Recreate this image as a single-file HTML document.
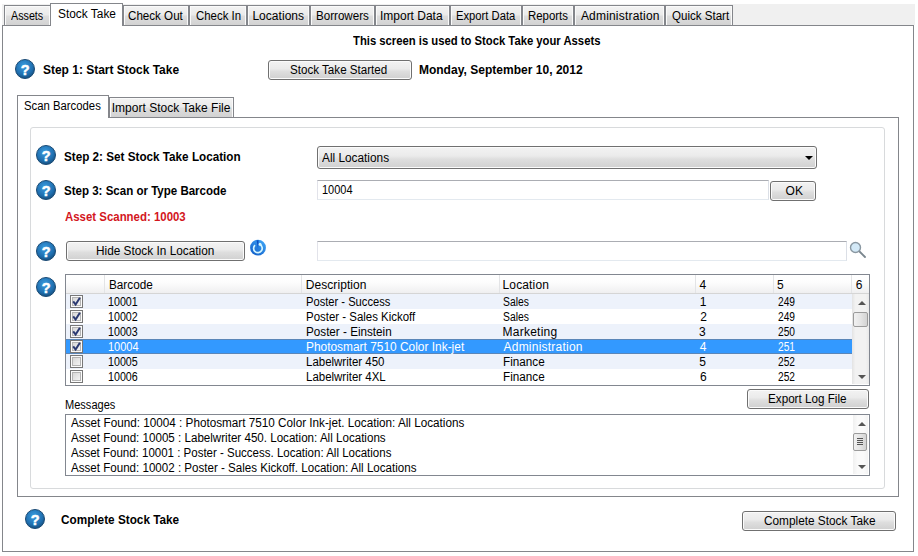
<!DOCTYPE html>
<html><head><meta charset="utf-8"><style>
html,body{margin:0;padding:0;background:#fff;}
body{width:918px;height:556px;position:relative;overflow:hidden;font-family:"Liberation Sans", sans-serif;font-size:12px;}
.t{position:absolute;line-height:12px;white-space:nowrap;font-size:12px;}
</style></head><body>
<div style="position:absolute;left:2px;top:4px;width:913px;height:21px;background:#f0f0f0"></div>
<div style="position:absolute;left:2px;top:25px;width:910px;height:525px;border:1px solid #84868b;background:#fff"></div>
<div style="position:absolute;left:4px;top:5px;width:45px;height:19px;border:1px solid #84868b;border-bottom:none;background:linear-gradient(#f3f3f3 0%,#ebebeb 45%,#dddddd 55%,#d2d2d2 100%);box-shadow:inset 1px 1px 0 #fafafa,inset -1px 0 0 #fafafa"></div>
<div style="position:absolute;left:123px;top:5px;width:64px;height:19px;border:1px solid #84868b;border-bottom:none;background:linear-gradient(#f3f3f3 0%,#ebebeb 45%,#dddddd 55%,#d2d2d2 100%);box-shadow:inset 1px 1px 0 #fafafa,inset -1px 0 0 #fafafa"></div>
<div style="position:absolute;left:189px;top:5px;width:56px;height:19px;border:1px solid #84868b;border-bottom:none;background:linear-gradient(#f3f3f3 0%,#ebebeb 45%,#dddddd 55%,#d2d2d2 100%);box-shadow:inset 1px 1px 0 #fafafa,inset -1px 0 0 #fafafa"></div>
<div style="position:absolute;left:247px;top:5px;width:61px;height:19px;border:1px solid #84868b;border-bottom:none;background:linear-gradient(#f3f3f3 0%,#ebebeb 45%,#dddddd 55%,#d2d2d2 100%);box-shadow:inset 1px 1px 0 #fafafa,inset -1px 0 0 #fafafa"></div>
<div style="position:absolute;left:310px;top:5px;width:63px;height:19px;border:1px solid #84868b;border-bottom:none;background:linear-gradient(#f3f3f3 0%,#ebebeb 45%,#dddddd 55%,#d2d2d2 100%);box-shadow:inset 1px 1px 0 #fafafa,inset -1px 0 0 #fafafa"></div>
<div style="position:absolute;left:375px;top:5px;width:73px;height:19px;border:1px solid #84868b;border-bottom:none;background:linear-gradient(#f3f3f3 0%,#ebebeb 45%,#dddddd 55%,#d2d2d2 100%);box-shadow:inset 1px 1px 0 #fafafa,inset -1px 0 0 #fafafa"></div>
<div style="position:absolute;left:450px;top:5px;width:70px;height:19px;border:1px solid #84868b;border-bottom:none;background:linear-gradient(#f3f3f3 0%,#ebebeb 45%,#dddddd 55%,#d2d2d2 100%);box-shadow:inset 1px 1px 0 #fafafa,inset -1px 0 0 #fafafa"></div>
<div style="position:absolute;left:522px;top:5px;width:50px;height:19px;border:1px solid #84868b;border-bottom:none;background:linear-gradient(#f3f3f3 0%,#ebebeb 45%,#dddddd 55%,#d2d2d2 100%);box-shadow:inset 1px 1px 0 #fafafa,inset -1px 0 0 #fafafa"></div>
<div style="position:absolute;left:574px;top:5px;width:89px;height:19px;border:1px solid #84868b;border-bottom:none;background:linear-gradient(#f3f3f3 0%,#ebebeb 45%,#dddddd 55%,#d2d2d2 100%);box-shadow:inset 1px 1px 0 #fafafa,inset -1px 0 0 #fafafa"></div>
<div style="position:absolute;left:665px;top:5px;width:66px;height:19px;border:1px solid #84868b;border-bottom:none;background:linear-gradient(#f3f3f3 0%,#ebebeb 45%,#dddddd 55%,#d2d2d2 100%);box-shadow:inset 1px 1px 0 #fafafa,inset -1px 0 0 #fafafa"></div>
<div style="position:absolute;left:50px;top:3px;width:71px;height:22px;border:1px solid #84868b;border-bottom:none;background:#fff"></div>
<div style="position:absolute;left:15px;top:59px;width:20px;height:20px"><svg width="20" height="20" viewBox="0 0 20 20"><defs><radialGradient id="hg1" cx="45%" cy="35%" r="65%"><stop offset="0" stop-color="#3b9de0"/><stop offset="0.7" stop-color="#1f6fb0"/><stop offset="1" stop-color="#17507f"/></radialGradient></defs><circle cx="10" cy="10" r="9.5" fill="url(#hg1)" stroke="#1b4b74" stroke-width="1"/><text x="10.1" y="15.5" text-anchor="middle" font-family="Liberation Sans" font-weight="bold" font-size="14.5" fill="#fff" stroke="#fff" stroke-width="0.5">?</text></svg></div>
<div style="position:absolute;left:268px;top:60px;width:142px;height:18px;border:1px solid #707070;border-radius:3px;background:linear-gradient(#f3f3f3 0%,#ebebeb 42%,#dedede 58%,#d0d0d0 100%);box-shadow:inset 0 0 0 1px #fbfbfb"></div>
<div style="position:absolute;left:17px;top:117px;width:880px;height:378px;border:1px solid #84868b;background:#fff"></div>
<div style="position:absolute;left:109px;top:97px;width:123px;height:19px;border:1px solid #84868b;border-bottom:none;background:linear-gradient(#f3f3f3 0%,#ebebeb 45%,#dddddd 55%,#d2d2d2 100%);box-shadow:inset 1px 1px 0 #fafafa,inset -1px 0 0 #fafafa"></div>
<div style="position:absolute;left:17px;top:95px;width:90px;height:22px;border:1px solid #84868b;border-bottom:none;background:#fff"></div>
<div style="position:absolute;left:30px;top:127px;width:853px;height:360px;border:1px solid #d8dadc;border-radius:3px"></div>
<div style="position:absolute;left:36px;top:145px;width:20px;height:20px"><svg width="20" height="20" viewBox="0 0 20 20"><defs><radialGradient id="hg2" cx="45%" cy="35%" r="65%"><stop offset="0" stop-color="#3b9de0"/><stop offset="0.7" stop-color="#1f6fb0"/><stop offset="1" stop-color="#17507f"/></radialGradient></defs><circle cx="10" cy="10" r="9.5" fill="url(#hg2)" stroke="#1b4b74" stroke-width="1"/><text x="10.1" y="15.5" text-anchor="middle" font-family="Liberation Sans" font-weight="bold" font-size="14.5" fill="#fff" stroke="#fff" stroke-width="0.5">?</text></svg></div>
<div style="position:absolute;left:317px;top:146px;width:498px;height:21px;border:1px solid #707070;border-radius:3px;background:linear-gradient(#f3f3f3 0%,#ebebeb 42%,#dedede 58%,#d0d0d0 100%);box-shadow:inset 0 0 0 1px #fbfbfb"></div>
<div style="position:absolute;left:804.5px;top:155.5px;width:0;height:0;border-left:4px solid transparent;border-right:4px solid transparent;border-top:4.5px solid #000"></div>
<div style="position:absolute;left:36px;top:180px;width:20px;height:20px"><svg width="20" height="20" viewBox="0 0 20 20"><defs><radialGradient id="hg3" cx="45%" cy="35%" r="65%"><stop offset="0" stop-color="#3b9de0"/><stop offset="0.7" stop-color="#1f6fb0"/><stop offset="1" stop-color="#17507f"/></radialGradient></defs><circle cx="10" cy="10" r="9.5" fill="url(#hg3)" stroke="#1b4b74" stroke-width="1"/><text x="10.1" y="15.5" text-anchor="middle" font-family="Liberation Sans" font-weight="bold" font-size="14.5" fill="#fff" stroke="#fff" stroke-width="0.5">?</text></svg></div>
<div style="position:absolute;left:317px;top:180px;width:450px;height:18px;border:1px solid;border-color:#abadb3 #dbdfe6 #e3e9ef #e2e3ea;background:#fff"></div>
<div style="position:absolute;left:770px;top:181px;width:44px;height:18px;border:1px solid #707070;border-radius:3px;background:linear-gradient(#f3f3f3 0%,#ebebeb 42%,#dedede 58%,#d0d0d0 100%);box-shadow:inset 0 0 0 1px #fbfbfb"></div>
<div style="position:absolute;left:36px;top:241px;width:20px;height:20px"><svg width="20" height="20" viewBox="0 0 20 20"><defs><radialGradient id="hg4" cx="45%" cy="35%" r="65%"><stop offset="0" stop-color="#3b9de0"/><stop offset="0.7" stop-color="#1f6fb0"/><stop offset="1" stop-color="#17507f"/></radialGradient></defs><circle cx="10" cy="10" r="9.5" fill="url(#hg4)" stroke="#1b4b74" stroke-width="1"/><text x="10.1" y="15.5" text-anchor="middle" font-family="Liberation Sans" font-weight="bold" font-size="14.5" fill="#fff" stroke="#fff" stroke-width="0.5">?</text></svg></div>
<div style="position:absolute;left:66px;top:241px;width:177px;height:18px;border:1px solid #707070;border-radius:3px;background:linear-gradient(#f3f3f3 0%,#ebebeb 42%,#dedede 58%,#d0d0d0 100%);box-shadow:inset 0 0 0 1px #fbfbfb"></div>
<div style="position:absolute;left:248px;top:238px;width:20px;height:20px"><svg width="20" height="20" viewBox="0 0 20 20"><defs><linearGradient id="rg" x1="0.8" y1="0.1" x2="0.2" y2="0.9"><stop offset="0" stop-color="#3b9ff2"/><stop offset="1" stop-color="#1463cc"/></linearGradient></defs><circle cx="10" cy="9.7" r="7.9" fill="url(#rg)"/><path d="M7.0 7.2 A4.3 4.3 0 1 0 12.0 6.6" fill="none" stroke="#d4f6ff" stroke-width="1.7"/><circle cx="12" cy="6.2" r="1.5" fill="#d4f6ff"/><path d="M8.6 2.2 L10.6 2.2 L10.0 10.6 Z" fill="#0c4cc0"/></svg></div>
<div style="position:absolute;left:317px;top:241px;width:528px;height:18px;border:1px solid;border-color:#abadb3 #dbdfe6 #e3e9ef #e2e3ea;background:#fff"></div>
<div style="position:absolute;left:848px;top:240px;width:20px;height:20px"><svg width="20" height="20" viewBox="0 0 20 20"><line x1="11.5" y1="11.5" x2="17" y2="17" stroke="#7a868e" stroke-width="1.8" stroke-linecap="round"/><circle cx="7.5" cy="7.5" r="5" fill="#d3e9f7" stroke="#8a98a2" stroke-width="1.4"/></svg></div>
<div style="position:absolute;left:36px;top:277px;width:20px;height:20px"><svg width="20" height="20" viewBox="0 0 20 20"><defs><radialGradient id="hg5" cx="45%" cy="35%" r="65%"><stop offset="0" stop-color="#3b9de0"/><stop offset="0.7" stop-color="#1f6fb0"/><stop offset="1" stop-color="#17507f"/></radialGradient></defs><circle cx="10" cy="10" r="9.5" fill="url(#hg5)" stroke="#1b4b74" stroke-width="1"/><text x="10.1" y="15.5" text-anchor="middle" font-family="Liberation Sans" font-weight="bold" font-size="14.5" fill="#fff" stroke="#fff" stroke-width="0.5">?</text></svg></div>
<div style="position:absolute;left:65px;top:274px;width:803px;height:110px;border:1px solid #828790;background:#fff;overflow:hidden"></div>
<div style="position:absolute;left:66px;top:275px;width:803px;height:18px;background:linear-gradient(#ffffff 0%,#fdfdfd 40%,#efeff0 100%);border-bottom:1px solid #d5d5d5"></div>
<div style="position:absolute;left:104px;top:275px;width:1px;height:18px;background:#e3e4e6"></div>
<div style="position:absolute;left:301px;top:275px;width:1px;height:18px;background:#e3e4e6"></div>
<div style="position:absolute;left:499px;top:275px;width:1px;height:18px;background:#e3e4e6"></div>
<div style="position:absolute;left:695px;top:275px;width:1px;height:18px;background:#e3e4e6"></div>
<div style="position:absolute;left:773px;top:275px;width:1px;height:18px;background:#e3e4e6"></div>
<div style="position:absolute;left:851px;top:275px;width:1px;height:18px;background:#e3e4e6"></div>
<div style="position:absolute;left:66px;top:294px;width:786px;height:15px;background:#edf2fb"></div>
<div style="position:absolute;left:70px;top:295px;width:13px;height:13px"><svg width="13" height="13" viewBox="0 0 13 13"><defs><linearGradient id="cbg0" x1="0" y1="0" x2="1" y2="1"><stop offset="0" stop-color="#d6d6d6"/><stop offset="1" stop-color="#f6f6f6"/></linearGradient></defs><rect x="0.5" y="0.5" width="12" height="12" fill="#fbfbfb" stroke="#777"/><rect x="2.5" y="2.5" width="8" height="8" fill="url(#cbg0)" stroke="#b4b4b4" stroke-width="1"/><path d="M3.2 6.4 L5.6 9.6 L9.9 2.8" fill="none" stroke="#2b3a72" stroke-width="2"/></svg></div>
<div style="position:absolute;left:66px;top:309px;width:786px;height:15px;background:#ffffff"></div>
<div style="position:absolute;left:70px;top:310px;width:13px;height:13px"><svg width="13" height="13" viewBox="0 0 13 13"><defs><linearGradient id="cbg1" x1="0" y1="0" x2="1" y2="1"><stop offset="0" stop-color="#d6d6d6"/><stop offset="1" stop-color="#f6f6f6"/></linearGradient></defs><rect x="0.5" y="0.5" width="12" height="12" fill="#fbfbfb" stroke="#777"/><rect x="2.5" y="2.5" width="8" height="8" fill="url(#cbg1)" stroke="#b4b4b4" stroke-width="1"/><path d="M3.2 6.4 L5.6 9.6 L9.9 2.8" fill="none" stroke="#2b3a72" stroke-width="2"/></svg></div>
<div style="position:absolute;left:66px;top:324px;width:786px;height:15px;background:#edf2fb"></div>
<div style="position:absolute;left:70px;top:325px;width:13px;height:13px"><svg width="13" height="13" viewBox="0 0 13 13"><defs><linearGradient id="cbg2" x1="0" y1="0" x2="1" y2="1"><stop offset="0" stop-color="#d6d6d6"/><stop offset="1" stop-color="#f6f6f6"/></linearGradient></defs><rect x="0.5" y="0.5" width="12" height="12" fill="#fbfbfb" stroke="#777"/><rect x="2.5" y="2.5" width="8" height="8" fill="url(#cbg2)" stroke="#b4b4b4" stroke-width="1"/><path d="M3.2 6.4 L5.6 9.6 L9.9 2.8" fill="none" stroke="#2b3a72" stroke-width="2"/></svg></div>
<div style="position:absolute;left:66px;top:339px;width:786px;height:15px;background:#3399ff;box-shadow:inset 0 1px 0 #5a86b8,inset 0 -1px 0 #5a86b8"></div>
<div style="position:absolute;left:70px;top:340px;width:13px;height:13px"><svg width="13" height="13" viewBox="0 0 13 13"><defs><linearGradient id="cbg3" x1="0" y1="0" x2="1" y2="1"><stop offset="0" stop-color="#d6d6d6"/><stop offset="1" stop-color="#f6f6f6"/></linearGradient></defs><rect x="0.5" y="0.5" width="12" height="12" fill="#fbfbfb" stroke="#777"/><rect x="2.5" y="2.5" width="8" height="8" fill="url(#cbg3)" stroke="#b4b4b4" stroke-width="1"/><path d="M3.2 6.4 L5.6 9.6 L9.9 2.8" fill="none" stroke="#2b3a72" stroke-width="2"/></svg></div>
<div style="position:absolute;left:66px;top:354px;width:786px;height:15px;background:#edf2fb"></div>
<div style="position:absolute;left:70px;top:355px;width:13px;height:13px"><svg width="13" height="13" viewBox="0 0 13 13"><defs><linearGradient id="cbg4" x1="0" y1="0" x2="1" y2="1"><stop offset="0" stop-color="#d6d6d6"/><stop offset="1" stop-color="#f6f6f6"/></linearGradient></defs><rect x="0.5" y="0.5" width="12" height="12" fill="#fbfbfb" stroke="#777"/><rect x="2.5" y="2.5" width="8" height="8" fill="url(#cbg4)" stroke="#b4b4b4" stroke-width="1"/></svg></div>
<div style="position:absolute;left:66px;top:369px;width:786px;height:15px;background:#ffffff"></div>
<div style="position:absolute;left:70px;top:370px;width:13px;height:13px"><svg width="13" height="13" viewBox="0 0 13 13"><defs><linearGradient id="cbg5" x1="0" y1="0" x2="1" y2="1"><stop offset="0" stop-color="#d6d6d6"/><stop offset="1" stop-color="#f6f6f6"/></linearGradient></defs><rect x="0.5" y="0.5" width="12" height="12" fill="#fbfbfb" stroke="#777"/><rect x="2.5" y="2.5" width="8" height="8" fill="url(#cbg5)" stroke="#b4b4b4" stroke-width="1"/></svg></div>
<div style="position:absolute;left:852px;top:294px;width:17px;height:90px;background:linear-gradient(90deg,#e3e3e3,#f2f2f2 20%,#f2f2f2 80%,#e9e9e9)"></div>
<div style="position:absolute;left:857.5px;top:301px;width:0;height:0;border-left:4px solid transparent;border-right:4px solid transparent;border-bottom:4px solid #555"></div>
<div style="position:absolute;left:857.5px;top:375px;width:0;height:0;border-left:4px solid transparent;border-right:4px solid transparent;border-top:4px solid #555"></div>
<div style="position:absolute;left:853px;top:312px;width:13px;height:13px;border:1px solid #9b9b9b;border-radius:2px;background:linear-gradient(90deg,#f1f1f1,#e5e5e5 50%,#d3d3d3)"></div>
<div style="position:absolute;left:747px;top:389px;width:120px;height:18px;border:1px solid #707070;border-radius:3px;background:linear-gradient(#f3f3f3 0%,#ebebeb 42%,#dedede 58%,#d0d0d0 100%);box-shadow:inset 0 0 0 1px #fbfbfb"></div>
<div style="position:absolute;left:65px;top:414px;width:803px;height:60px;border:1px solid #828790;background:#fff"></div>
<div style="position:absolute;left:853px;top:415px;width:15px;height:59px;background:linear-gradient(90deg,#f0f0f0,#fafafa 30%,#fafafa 70%,#f3f3f3)"></div>
<div style="position:absolute;left:857.5px;top:422px;width:0;height:0;border-left:4px solid transparent;border-right:4px solid transparent;border-bottom:4px solid #555"></div>
<div style="position:absolute;left:857.5px;top:465px;width:0;height:0;border-left:4px solid transparent;border-right:4px solid transparent;border-top:4px solid #555"></div>
<div style="position:absolute;left:853px;top:433px;width:12px;height:16px;border:1px solid #9b9b9b;border-radius:2px;background:linear-gradient(90deg,#f1f1f1,#e5e5e5 50%,#d3d3d3)"><div style="position:absolute;left:3px;top:4px;width:6px;height:1px;background:#555;box-shadow:0 2px 0 #555,0 4px 0 #555,0 6px 0 #555"></div></div>
<div style="position:absolute;left:25px;top:509px;width:20px;height:20px"><svg width="20" height="20" viewBox="0 0 20 20"><defs><radialGradient id="hg6" cx="45%" cy="35%" r="65%"><stop offset="0" stop-color="#3b9de0"/><stop offset="0.7" stop-color="#1f6fb0"/><stop offset="1" stop-color="#17507f"/></radialGradient></defs><circle cx="10" cy="10" r="9.5" fill="url(#hg6)" stroke="#1b4b74" stroke-width="1"/><text x="10.1" y="15.5" text-anchor="middle" font-family="Liberation Sans" font-weight="bold" font-size="14.5" fill="#fff" stroke="#fff" stroke-width="0.5">?</text></svg></div>
<div style="position:absolute;left:742px;top:511px;width:152px;height:18px;border:1px solid #707070;border-radius:3px;background:linear-gradient(#f3f3f3 0%,#ebebeb 42%,#dedede 58%,#d0d0d0 100%);box-shadow:inset 0 0 0 1px #fbfbfb"></div>
<div class="t" style="left:10.60px;top:10px;font-weight:normal;color:#000;transform:scaleX(0.8944);transform-origin:0 0;">Assets</div>
<div class="t" style="left:127.80px;top:10px;font-weight:normal;color:#000;transform:scaleX(0.9667);transform-origin:0 0;">Check Out</div>
<div class="t" style="left:195.70px;top:10px;font-weight:normal;color:#000;transform:scaleX(0.9511);transform-origin:0 0;">Check In</div>
<div class="t" style="left:252.40px;top:10px;font-weight:normal;color:#000;letter-spacing:0.037px;">Locations</div>
<div class="t" style="left:315.73px;top:10px;font-weight:normal;color:#000;transform:scaleX(0.9667);transform-origin:0 0;">Borrowers</div>
<div class="t" style="left:380.30px;top:10px;font-weight:normal;color:#000;transform:scaleX(0.9984);transform-origin:0 0;">Import Data</div>
<div class="t" style="left:455.67px;top:10px;font-weight:normal;color:#000;transform:scaleX(0.9349);transform-origin:0 0;">Export Data</div>
<div class="t" style="left:527.65px;top:10px;font-weight:normal;color:#000;transform:scaleX(0.9512);transform-origin:0 0;">Reports</div>
<div class="t" style="left:580.90px;top:10px;font-weight:normal;color:#000;letter-spacing:0.192px;">Administration</div>
<div class="t" style="left:671.90px;top:10px;font-weight:normal;color:#000;transform:scaleX(0.9627);transform-origin:0 0;">Quick Start</div>
<div class="t" style="left:58.31px;top:8px;font-weight:normal;color:#000;transform:scaleX(0.9912);transform-origin:0 0;">Stock Take</div>
<div class="t" style="left:352.80px;top:35px;font-weight:bold;color:#000;transform:scaleX(0.9392);transform-origin:0 0;">This screen is used to Stock Take your Assets</div>
<div class="t" style="left:43.40px;top:64px;font-weight:bold;color:#000;transform:scaleX(0.9970);transform-origin:0 0;">Step 1: Start Stock Take</div>
<div class="t" style="left:290.43px;top:64px;font-weight:normal;color:#000;transform:scaleX(0.9677);transform-origin:0 0;">Stock Take Started</div>
<div class="t" style="left:418.90px;top:64px;font-weight:bold;color:#000;letter-spacing:0.024px;">Monday, September 10, 2012</div>
<div class="t" style="left:111.70px;top:102px;font-weight:normal;color:#000;letter-spacing:0.014px;">Import Stock Take File</div>
<div class="t" style="left:24.26px;top:100px;font-weight:normal;color:#000;transform:scaleX(0.9437);transform-origin:0 0;">Scan Barcodes</div>
<div class="t" style="left:64.23px;top:151px;font-weight:bold;color:#000;transform:scaleX(0.9750);transform-origin:0 0;">Step 2: Set Stock Take Location</div>
<div class="t" style="left:321.70px;top:152px;font-weight:normal;color:#000;transform:scaleX(0.9853);transform-origin:0 0;">All Locations</div>
<div class="t" style="left:64.24px;top:185px;font-weight:bold;color:#000;transform:scaleX(0.9607);transform-origin:0 0;">Step 3: Scan or Type Barcode</div>
<div class="t" style="left:321.68px;top:184px;font-weight:normal;color:#000;transform:scaleX(0.9156);transform-origin:0 0;">10004</div>
<div class="t" style="left:785.60px;top:185px;font-weight:normal;color:#000;">OK</div>
<div class="t" style="left:65.20px;top:211px;font-weight:bold;color:#d3161d;transform:scaleX(0.9524);transform-origin:0 0;">Asset Scanned: 10003</div>
<div class="t" style="left:95.71px;top:245px;font-weight:normal;color:#000;transform:scaleX(0.9857);transform-origin:0 0;">Hide Stock In Location</div>
<div class="t" style="left:108.62px;top:279px;font-weight:normal;color:#000;transform:scaleX(0.9791);transform-origin:0 0;">Barcode</div>
<div class="t" style="left:305.70px;top:279px;font-weight:normal;color:#000;letter-spacing:0.080px;">Description</div>
<div class="t" style="left:502.50px;top:279px;font-weight:normal;color:#000;letter-spacing:0.143px;">Location</div>
<div class="t" style="left:699.60px;top:279px;font-weight:normal;color:#000;">4</div>
<div class="t" style="left:777.10px;top:279px;font-weight:normal;color:#000;">5</div>
<div class="t" style="left:855.80px;top:279px;font-weight:normal;color:#000;">6</div>
<div class="t" style="left:108.31px;top:296px;font-weight:normal;color:#000;transform:scaleX(0.8906);transform-origin:0 0;">10001</div>
<div class="t" style="left:305.97px;top:296px;font-weight:normal;color:#000;transform:scaleX(0.9300);transform-origin:0 0;">Poster - Success</div>
<div class="t" style="left:502.64px;top:296px;font-weight:normal;color:#000;transform:scaleX(0.8621);transform-origin:0 0;">Sales</div>
<div class="t" style="left:699.70px;top:296px;font-weight:normal;color:#000;">1</div>
<div class="t" style="left:778.10px;top:296px;font-weight:normal;color:#000;transform:scaleX(0.8500);transform-origin:0 0;">249</div>
<div class="t" style="left:108.31px;top:311px;font-weight:normal;color:#000;transform:scaleX(0.8906);transform-origin:0 0;">10002</div>
<div class="t" style="left:305.95px;top:311px;font-weight:normal;color:#000;transform:scaleX(0.9544);transform-origin:0 0;">Poster - Sales Kickoff</div>
<div class="t" style="left:502.64px;top:311px;font-weight:normal;color:#000;transform:scaleX(0.8621);transform-origin:0 0;">Sales</div>
<div class="t" style="left:700.30px;top:311px;font-weight:normal;color:#000;">2</div>
<div class="t" style="left:778.10px;top:311px;font-weight:normal;color:#000;transform:scaleX(0.8500);transform-origin:0 0;">249</div>
<div class="t" style="left:108.31px;top:326px;font-weight:normal;color:#000;transform:scaleX(0.8906);transform-origin:0 0;">10003</div>
<div class="t" style="left:305.93px;top:326px;font-weight:normal;color:#000;transform:scaleX(0.9733);transform-origin:0 0;">Poster - Einstein</div>
<div class="t" style="left:502.50px;top:326px;font-weight:normal;color:#000;letter-spacing:0.250px;">Marketing</div>
<div class="t" style="left:699.00px;top:326px;font-weight:normal;color:#000;">3</div>
<div class="t" style="left:778.10px;top:326px;font-weight:normal;color:#000;transform:scaleX(0.8500);transform-origin:0 0;">250</div>
<div class="t" style="left:108.28px;top:341px;font-weight:normal;color:#ffffff;transform:scaleX(0.9156);transform-origin:0 0;">10004</div>
<div class="t" style="left:305.91px;top:341px;font-weight:normal;color:#ffffff;transform:scaleX(0.9924);transform-origin:0 0;">Photosmart 7510 Color Ink-jet</div>
<div class="t" style="left:503.50px;top:341px;font-weight:normal;color:#ffffff;letter-spacing:0.231px;">Administration</div>
<div class="t" style="left:699.80px;top:341px;font-weight:normal;color:#ffffff;">4</div>
<div class="t" style="left:778.10px;top:341px;font-weight:normal;color:#ffffff;transform:scaleX(0.8500);transform-origin:0 0;">251</div>
<div class="t" style="left:108.31px;top:356px;font-weight:normal;color:#000;transform:scaleX(0.8906);transform-origin:0 0;">10005</div>
<div class="t" style="left:305.94px;top:356px;font-weight:normal;color:#000;transform:scaleX(0.9556);transform-origin:0 0;">Labelwriter 450</div>
<div class="t" style="left:502.52px;top:356px;font-weight:normal;color:#000;transform:scaleX(0.9756);transform-origin:0 0;">Finance</div>
<div class="t" style="left:699.20px;top:356px;font-weight:normal;color:#000;">5</div>
<div class="t" style="left:778.10px;top:356px;font-weight:normal;color:#000;transform:scaleX(0.8500);transform-origin:0 0;">252</div>
<div class="t" style="left:108.31px;top:371px;font-weight:normal;color:#000;transform:scaleX(0.8906);transform-origin:0 0;">10006</div>
<div class="t" style="left:305.94px;top:371px;font-weight:normal;color:#000;transform:scaleX(0.9561);transform-origin:0 0;">Labelwriter 4XL</div>
<div class="t" style="left:502.52px;top:371px;font-weight:normal;color:#000;transform:scaleX(0.9756);transform-origin:0 0;">Finance</div>
<div class="t" style="left:700.00px;top:371px;font-weight:normal;color:#000;">6</div>
<div class="t" style="left:778.10px;top:371px;font-weight:normal;color:#000;transform:scaleX(0.8500);transform-origin:0 0;">252</div>
<div class="t" style="left:65.08px;top:399px;font-weight:normal;color:#000;transform:scaleX(0.9204);transform-origin:0 0;">Messages</div>
<div class="t" style="left:768.43px;top:393px;font-weight:normal;color:#000;transform:scaleX(0.9734);transform-origin:0 0;">Export Log File</div>
<div class="t" style="left:70.50px;top:417px;font-weight:normal;color:#000;transform:scaleX(0.9762);transform-origin:0 0;">Asset Found: 10004 : Photosmart 7510 Color Ink-jet. Location: All Locations</div>
<div class="t" style="left:70.50px;top:432px;font-weight:normal;color:#000;transform:scaleX(0.9665);transform-origin:0 0;">Asset Found: 10005 : Labelwriter 450. Location: All Locations</div>
<div class="t" style="left:70.50px;top:447px;font-weight:normal;color:#000;transform:scaleX(0.9587);transform-origin:0 0;">Asset Found: 10001 : Poster - Success. Location: All Locations</div>
<div class="t" style="left:70.50px;top:462px;font-weight:normal;color:#000;transform:scaleX(0.9651);transform-origin:0 0;">Asset Found: 10002 : Poster - Sales Kickoff. Location: All Locations</div>
<div class="t" style="left:60.60px;top:514px;font-weight:bold;color:#000;transform:scaleX(0.9808);transform-origin:0 0;">Complete Stock Take</div>
<div class="t" style="left:763.70px;top:515px;font-weight:normal;color:#000;transform:scaleX(0.9850);transform-origin:0 0;">Complete Stock Take</div>
</body></html>
